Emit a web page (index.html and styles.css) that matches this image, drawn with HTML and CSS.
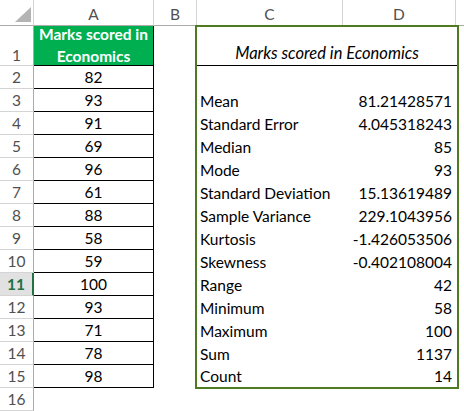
FILE: index.html
```html
<!DOCTYPE html>
<html lang="en">
<head>
    <meta charset="UTF-8">
    <title>Marks scored in Economics</title>
    <link rel="stylesheet" href="styles.css">
</head>
<body>
    <div class="sheet">
        <!-- column headers -->
        <div class="corner"><span class="corner-tri"></span></div>
        <div class="col-head">A</div>
        <div class="col-head">B</div>
        <div class="col-head">C</div>
        <div class="col-head">D</div>
        <div class="col-head last"></div>

        <!-- descriptive statistics box over C1:D15 -->
        <div class="stats">
            <div class="stats-title">Marks scored in Economics</div>
            <div class="stats-gap"></div>
            <div class="label">Mean</div><div class="value">81.21428571</div>
            <div class="label">Standard Error</div><div class="value">4.045318243</div>
            <div class="label">Median</div><div class="value">85</div>
            <div class="label">Mode</div><div class="value">93</div>
            <div class="label">Standard Deviation</div><div class="value">15.13619489</div>
            <div class="label">Sample Variance</div><div class="value">229.1043956</div>
            <div class="label">Kurtosis</div><div class="value">-1.426053506</div>
            <div class="label">Skewness</div><div class="value">-0.402108004</div>
            <div class="label">Range</div><div class="value">42</div>
            <div class="label">Minimum</div><div class="value">58</div>
            <div class="label">Maximum</div><div class="value">100</div>
            <div class="label">Sum</div><div class="value">1137</div>
            <div class="label">Count</div><div class="value">14</div>
        </div>

        <div class="row-head first">1</div>
        <div class="cell-a title-cell">Marks scored in<br>Economics</div>
        <div class="row-head">2</div><div class="cell-a">82</div>
        <div class="row-head">3</div><div class="cell-a">93</div>
        <div class="row-head">4</div><div class="cell-a">91</div>
        <div class="row-head">5</div><div class="cell-a">69</div>
        <div class="row-head">6</div><div class="cell-a">96</div>
        <div class="row-head">7</div><div class="cell-a">61</div>
        <div class="row-head">8</div><div class="cell-a">88</div>
        <div class="row-head">9</div><div class="cell-a">58</div>
        <div class="row-head">10</div><div class="cell-a">59</div>
        <div class="row-head active">11</div><div class="cell-a">100</div>
        <div class="row-head">12</div><div class="cell-a">93</div>
        <div class="row-head">13</div><div class="cell-a">71</div>
        <div class="row-head">14</div><div class="cell-a">78</div>
        <div class="row-head">15</div><div class="cell-a">98</div>
        <div class="row-head">16</div>
    </div>
</body>
</html>
```

FILE: styles.css
```css
* {
    margin: 0;
    padding: 0;
    box-sizing: border-box;
}

body {
    background-color: white;
    font-family: Lato, "Liberation Sans", sans-serif;
    font-size: 15.5px;
    color: #000;
}

.sheet {
    display: grid;
    grid-template-columns: 34px 120px 43px 146px 113px 1fr;
    grid-template-rows: 26px 40px repeat(15, 23px);
    width: 464px;
    height: 411px;
    overflow: hidden;
}

/* Headers */
.corner {
    border-right: 1px solid #d4d4d4;
    border-bottom: 1px solid #ababab;
    display: flex;
    justify-content: flex-end;
    align-items: flex-end;
    padding: 0 2px 3px 0;
}

.corner-tri {
    width: 16px;
    height: 15px;
    background-color: #b4b4b4;
    clip-path: polygon(100% 0, 100% 100%, 0 100%);
}

.col-head {
    border-right: 1px solid #d4d4d4;
    border-bottom: 1px solid #ababab;
    color: #505050;
    display: flex;
    align-items: center;
    justify-content: center;
    padding-top: 2px;
}

.col-head.last {
    border-right: none;
}

.row-head {
    grid-column: 1;
    border-right: 1px solid #ababab;
    border-bottom: 1px solid #d4d4d4;
    color: #505050;
    display: flex;
    align-items: center;
    justify-content: center;
}

.row-head.first {
    align-items: flex-end;
    padding-bottom: 1px;
}

.row-head.active {
    background-color: #e1e1e1;
    color: #217346;
    font-weight: bold;
    border-right: 2px solid #217346;
}

/* Column A */
.cell-a {
    grid-column: 2;
    border-right: 1px solid #000;
    border-bottom: 1px solid #000;
    display: flex;
    align-items: center;
    justify-content: center;
}

.title-cell {
    background-color: #00b050;
    color: white;
    font-weight: bold;
    text-align: center;
    line-height: 22px;
    padding-bottom: 1px;
}

/* Statistics box */
.stats {
    grid-column: 4 / 6;
    grid-row: 2 / 17;
    margin: -1px -3px -1px -2px;
    border: 2px solid #4f7a21;
    display: grid;
    grid-template-columns: 146px 1fr;
    grid-template-rows: 39px repeat(13, 23px) 1fr;
    background-color: white;
}

.stats-title {
    grid-column: 1 / 3;
    border-bottom: 1px solid #000;
    font-style: italic;
    font-size: 16.5px;
    text-align: center;
    display: flex;
    align-items: flex-end;
    justify-content: center;
    padding-bottom: 2px;
}

.stats-gap {
    grid-column: 1 / 3;
}

.label {
    padding-left: 3px;
    display: flex;
    align-items: center;
    white-space: nowrap;
}

.value {
    padding-right: 5px;
    display: flex;
    align-items: center;
    justify-content: flex-end;
}
```
